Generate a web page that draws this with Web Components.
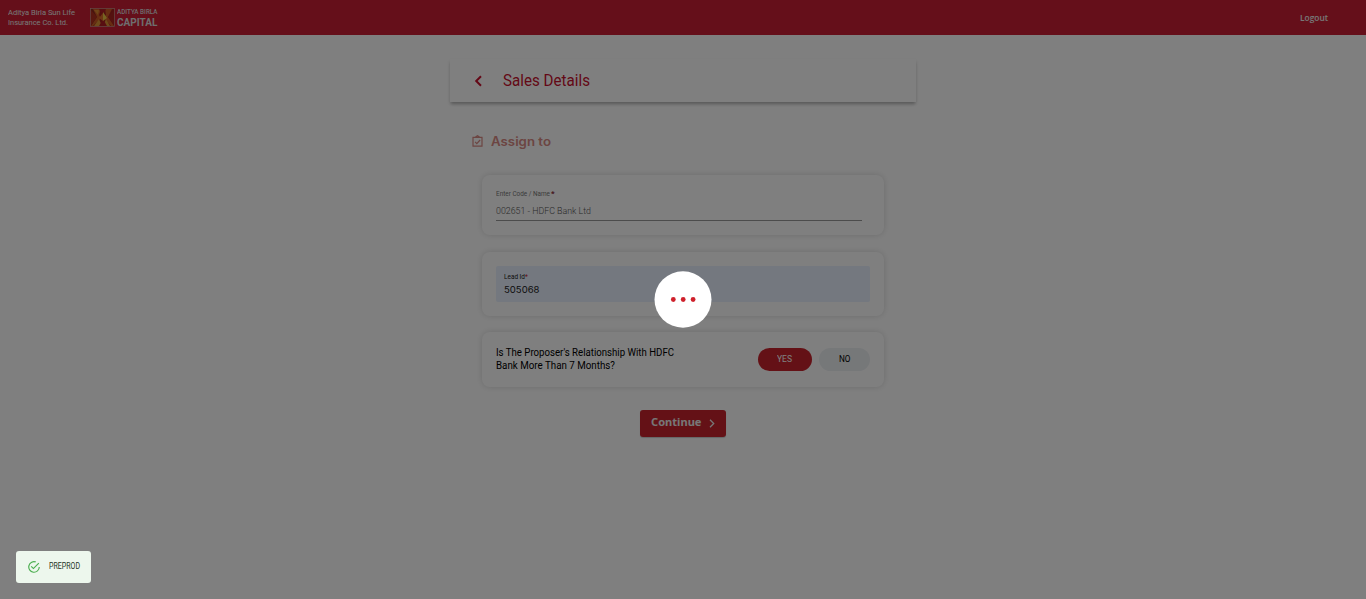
<!DOCTYPE html>
<html lang="en"><head><meta charset="utf-8"><title>Sales Details</title>
<style>html,body{margin:0;height:100%;background:#fff;overflow:hidden}body{font-family:Roboto,"Liberation Sans",sans-serif}</style></head>
<body><sales-app></sales-app>
<script>
const define=(name,html,ready)=>customElements.define(name,class extends HTMLElement{
  constructor(){super();this.attachShadow({mode:'open'}).innerHTML=html;}
  connectedCallback(){if(ready)ready(this);}
});
// Text line set to a fixed advance width
define('fit-text',`<style>:host{display:block;white-space:nowrap;flex:none}span{display:inline-block;transform-origin:0 50%}</style><span><slot></slot></span>`,el=>{
  const w=+el.getAttribute('w'),s=el.shadowRoot.querySelector('span');
  el.style.width=w+'px';
  requestAnimationFrame(()=>{const n=s.offsetWidth;if(n)s.style.transform='scaleX('+w/s.getBoundingClientRect().width+')';});
});
define('brand-logo',`<style>:host{display:flex;align-items:center;color:#ddd;gap:1.5px}
svg{display:block;flex:none}.n{display:grid;grid-template-rows:8px 9px;row-gap:1.5px}
.a{font:500 7.5px/8px Roboto,sans-serif}.b{font:700 10.5px/9px Roboto,sans-serif}</style>
<svg width="25" height="19" viewBox="0 0 25 19"><rect x=".5" y=".5" width="24" height="18" fill="#a3201f"/>
<path d="M1 1h5l3 8-3 9H1z" fill="#8e2a1c"/><path d="M3 1h8l-2 6 2 3-8 8H1l6-9z" fill="#cf5a24"/><path d="M22 1h-7l1 6-2 3 7 8h3l-6-9z" fill="#cf5a24"/><path d="M1 2l6 7-6 8z" fill="#b3301f"/><path d="M24 2l-6 7 6 8z" fill="#a8241f"/><path d="M4 18l5-7 3 7zM20 18l-4-7-3 7z" fill="#dc9434"/><path d="M9 1h7l-3 7zM9 18l4-7 4 7z" fill="#b01c22"/><path d="M13 4l4 6-4 3z" fill="#ecc744"/><path d="M13 5l-4 5 4 3z" fill="#dc6c28"/><path d="M4 2l5 0-1 5z" fill="#df8a30"/><rect x=".5" y=".5" width="24" height="18" fill="none" stroke="#c99a8c" stroke-width=".7"/></svg>
<div class="n"><fit-text class="a" w="40.5">ADITYA BIRLA</fit-text><fit-text class="b" w="40.5">CAPITAL</fit-text></div>`);
define('app-header',`<style>:host{display:flex;box-sizing:border-box;height:35px;background:#ca1e34;color:#eee;padding:0 38.5px 0 8px;align-items:center}
.c{font:400 8px/10px Roboto,sans-serif;padding-right:15px;display:grid;grid-auto-rows:10px}
.l{margin-left:auto;font:600 8.5px/12px "Open Sans",sans-serif;padding-top:1px}</style>
<div class="c"><fit-text w="67">Aditya Birla Sun Life</fit-text><fit-text w="60">Insurance Co. Ltd.</fit-text></div><brand-logo></brand-logo><fit-text class="l" w="28">Logout</fit-text>`);
define('page-title',`<style>:host{display:flex;align-items:center;box-sizing:border-box;width:466px;height:43px;padding-left:24px;color:#c8102e;background:#fff;box-shadow:0 3px 3px -1px rgba(0,0,0,.22),0 2px 4px rgba(0,0,0,.12)}
svg{margin-right:20px}fit-text{font:400 16.5px/22px Roboto,sans-serif;margin-top:1px}</style>
<svg width="9" height="12" viewBox="0 0 9 12"><path d="M7 1.2L2.2 6 7 10.8" fill="none" stroke="currentColor" stroke-width="2"/></svg><fit-text w="87"><slot></slot></fit-text>`);
define('section-title',`<style>:host{display:flex;align-items:center;height:20px;color:#d98a84;padding-left:22px}svg{margin-right:8px;margin-top:-2px}fit-text{font:600 12.5px/20px Inter,sans-serif}</style>
<svg width="11" height="12" viewBox="0 0 11 12"><path d="M1 2.3h9v8.9H1zM3.5 2.1L5.5.7l2 1.4M3.1 6.8l1.7 1.8L8.1 5" fill="none" stroke="currentColor" stroke-width="1.2"/></svg><fit-text w="60"><slot></slot></fit-text>`);
define('form-card',`<style>:host{display:block;box-sizing:border-box;width:402px;background:#fff;border-radius:8px;box-shadow:0 0 6px rgba(0,0,0,.15);padding:14px}</style><slot></slot>`);
define('code-field',`<style>:host{display:block;width:366px;height:31px;border-bottom:1px solid #999;color:#777}
.l{display:flex;font:400 6.5px/10px Roboto,sans-serif;gap:1px}.l b{color:#8a2a36;font-size:8px}.v{font:300 9.5px/14px Roboto,sans-serif;margin-top:5px;color:#555}</style>
<div class="l"><fit-text w="54">Enter Code / Name</fit-text><b>*</b></div><fit-text class="v" w="95">002651 - HDFC Bank Ltd</fit-text>`);
define('lead-field',`<style>:host{display:block;box-sizing:border-box;height:36px;background:#e8f0fe;border-radius:2px;padding:6px 8px;color:#222}
.l{display:flex;font:400 6.5px/10px Roboto,sans-serif}.l i{font-style:normal;color:#c51e32}.v{font:400 9.5px/15px Inter,sans-serif}</style>
<div class="l"><fit-text w="21">Lead Id</fit-text><i>*</i></div><fit-text class="v" w="35.5">505068</fit-text>`);
define('choice-pill',`<style>:host{display:flex;box-sizing:border-box;justify-content:center;align-items:center;width:51px;height:23px;border-radius:12px;background:#edf0f3;color:#000;font:400 9px/12px Roboto,sans-serif}
:host([selected]){width:54px;background:#c8232c;color:#fff;padding-right:1px}::slotted(fit-text){margin-top:-2px}</style><slot></slot>`);
define('question-row',`<style>:host{display:flex;align-items:center;height:27px;color:#000}.q{display:grid;grid-auto-rows:13px;font:400 10px/13px Roboto,sans-serif;flex:1;margin-top:-2px}.p{display:flex;gap:7px}</style>
<div class="q"><fit-text w="178">Is The Proposer's Relationship With HDFC</fit-text><fit-text w="119">Bank More Than 7 Months?</fit-text></div><div class="p"><choice-pill selected><fit-text w="15">YES</fit-text></choice-pill><choice-pill><fit-text w="11.5">NO</fit-text></choice-pill></div>`);
define('continue-button',`<style>:host{display:flex;box-sizing:border-box;align-items:center;width:86px;height:27px;padding-left:11px;border-radius:3px;background:#c8232c;color:#eee;box-shadow:0 1px 1px #0003}fit-text{font:700 11px/16px "Noto Sans",sans-serif;margin-top:-3px}svg{margin-left:7px}</style>
<fit-text w="50.5"><slot></slot></fit-text><svg width="6" height="9" viewBox="0 0 6 9"><path d="M1 .8l3.7 3.7L1 8.2" fill="none" stroke="currentColor" stroke-width="1.3"/></svg>`);
define('loading-veil',`<style>:host{position:fixed;inset:0;background:rgba(0,0,0,.5);display:flex;align-items:center;justify-content:center}
svg{display:block}</style><svg width="58" height="57" viewBox="0 0 58 57"><ellipse cx="29" cy="28.5" rx="28.5" ry="28.2" fill="#fff"/><g fill="#cf202b"><circle cx="19.3" cy="28.5" r="2.4"/><circle cx="29.2" cy="28.5" r="2.4"/><circle cx="39.1" cy="28.5" r="2.4"/></g></svg>`);
define('status-toast',`<style>:host{position:fixed;left:16px;bottom:16px;width:75px;height:32px;box-sizing:border-box;padding-left:11px;display:flex;align-items:center;background:#edf7ed;border-radius:3px;color:#1e3525}svg{margin-right:8px}fit-text{font:400 8.5px/12px Roboto,sans-serif;margin-top:-2px}</style>
<svg width="14" height="14" viewBox="0 0 24 24"><path fill="#4caf50" d="M20 12a8 8 0 1 1-5.8-7.7l1.6-1.6A10 10 0 1 0 22 12h-2zM7.9 10.1 6.5 11.5 11 16 21 6 19.6 4.6 11 13.2z"/></svg><fit-text w="31"><slot></slot></fit-text>`);
define('sales-app',`<style>:host{display:block;height:100%}main{width:466px;margin:0 auto;padding-top:24px;display:flex;flex-direction:column}
section-title{margin-top:30px}.cards{display:grid;margin:23px 0 0 32px;grid-template-rows:60px 64px 54px;row-gap:17px}
.three{margin-top:-1px}continue-button{align-self:center;margin-top:23px}</style>
<app-header></app-header><main><page-title>Sales Details</page-title><section-title>Assign to</section-title>
<div class="cards"><form-card><code-field></code-field></form-card><form-card class="two"><lead-field></lead-field></form-card><form-card class="three"><question-row></question-row></form-card></div><continue-button>Continue</continue-button></main><loading-veil></loading-veil><status-toast>PREPROD</status-toast>`);
</script></body></html>
